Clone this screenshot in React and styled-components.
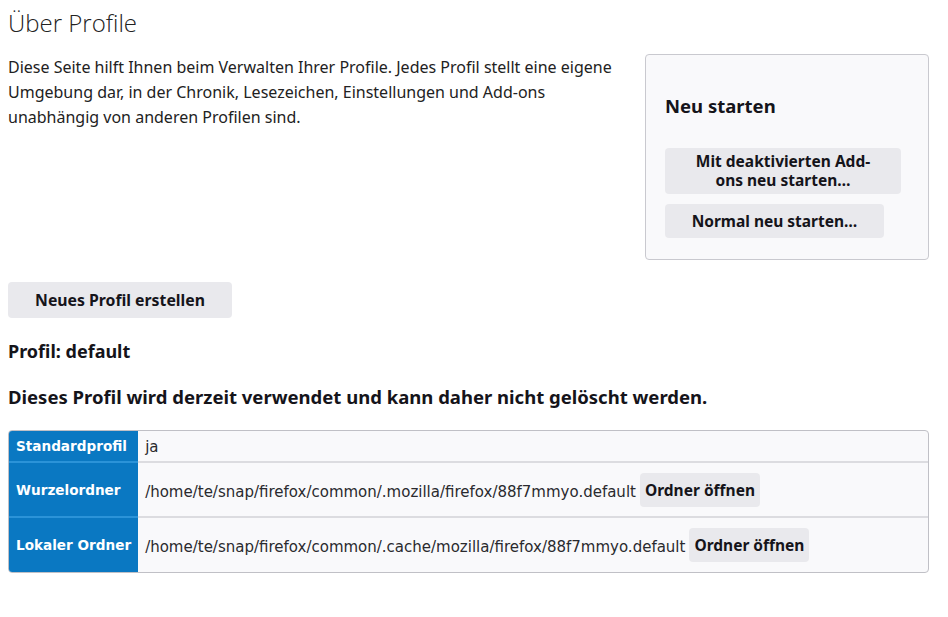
import React from 'react';
import styled, { createGlobalStyle } from 'styled-components';

const GlobalStyle = createGlobalStyle`
    body {
        margin: 8px;
        background: #fff;
        color: #15141a;
        font-family: "Noto Sans", "Open Sans", sans-serif;
    }
`

const Page = styled.div`
    width: 921px;
    display: flex;
    flex-direction: column;
`
const Title = styled.h1`
    margin: 0;
    font-family: "Open Sans", sans-serif;
    font-weight: 300;
    font-size: 24px;
    line-height: 30px;
    color: #222;
`
const TopRow = styled.div`
    display: flex;
    justify-content: space-between;
    align-items: flex-start;
    margin-top: 16px;
`
const Intro = styled.p`
    margin: 1px 0 0;
    width: 622px;
    font-size: 16px;
    line-height: 25px;
    color: #222;
`
const RestartBox = styled.aside`
    width: 244px;
    height: 204px;
    padding: 0 19px;
    background: #f9f9fb;
    border: 1px solid #c9c9cf;
    border-radius: 4px;
    display: flex;
    flex-direction: column;
    align-items: flex-start;
`
const BoxTitle = styled.h2`
    margin: 38px 0 29px;
    font-size: 18.5px;
    font-weight: 700;
    line-height: 26px;
`
const Button = styled.button`
    font-family: "Noto Sans", sans-serif;
    font-weight: 700;
    font-size: ${props => props.fs || 15.5}px;
    line-height: ${props => props.lh || 20}px;
    color: #15141a;
    background: #e9e9ed;
    border: 0;
    border-radius: 4px;
    padding: ${props => props.pad || '7px 14px'};
    width: ${props => props.w ? props.w + 'px' : 'auto'};
    margin: ${props => props.m || 0};
    text-align: center;
    white-space: ${props => props.nowrap ? 'nowrap' : 'normal'};
    cursor: pointer;
`
const CreateRow = styled.div`
    margin-top: 22px;
`
const ProfileName = styled.h2`
    margin: 21px 0 0;
    font-size: 18px;
    font-weight: 700;
    line-height: 24px;
`
const InUse = styled.h3`
    margin: 20px 0 0;
    font-size: 18.5px;
    font-weight: 700;
    line-height: 28px;
`
const Table = styled.table`
    margin-top: 19px;
    width: 921px;
    border-collapse: separate;
    border-spacing: 0;
    border: 1px solid #c0c0c6;
    border-radius: 4px;
    overflow: hidden;
    background: #f9f9fb;
    font-family: "DejaVu Sans", sans-serif;
`
const Th = styled.th`
    width: 114px;
    padding: 0 7px;
    text-align: left;
    white-space: nowrap;
    background: #0a78c2;
    color: #fff;
    font-size: 13.6px;
    font-weight: 700;
    height: ${props => props.h}px;
    border-top: ${props => props.first ? 'none' : '2px solid #2b93d8'};
`
const Td = styled.td`
    padding: 0 7px;
    font-size: 15px;
    color: #2a2a2e;
    white-space: nowrap;
    height: ${props => props.h}px;
    border-top: ${props => props.first ? 'none' : '2px solid #dcdce0'};
`
const Path = styled.span`
    vertical-align: middle;
`

const rows = [
    { label: 'Standardprofil', value: 'ja', h: 30 },
    { label: 'Wurzelordner', value: '/home/te/snap/firefox/common/.mozilla/firefox/88f7mmyo.default', h: 53, open: true },
    { label: 'Lokaler Ordner', value: '/home/te/snap/firefox/common/.cache/mozilla/firefox/88f7mmyo.default', h: 54, open: true },
]

const App = () => {
    return (
        <>
            <GlobalStyle />
            <Page>
                <Title>Über Profile</Title>
                <TopRow>
                    <Intro>
                        Diese Seite hilft Ihnen beim Verwalten Ihrer Profile. Jedes Profil stellt eine eigene
                        Umgebung dar, in der Chronik, Lesezeichen, Einstellungen und Add-ons
                        unabhängig von anderen Profilen sind.
                    </Intro>
                    <RestartBox>
                        <BoxTitle>Neu starten</BoxTitle>
                        <Button w={236} pad="4px 24px" lh={19}>Mit deaktivierten Add-ons neu starten…</Button>
                        <Button w={219} m="10px 0 0" nowrap>Normal neu starten…</Button>
                    </RestartBox>
                </TopRow>
                <CreateRow>
                    <Button w={224} pad="8px 6px" fs={15.8} nowrap>Neues Profil erstellen</Button>
                </CreateRow>
                <ProfileName>Profil: default</ProfileName>
                <InUse>Dieses Profil wird derzeit verwendet und kann daher nicht gelöscht werden.</InUse>
                <Table>
                    <tbody>
                        {rows.map((r, i) => (
                            <tr key={r.label}>
                                <Th h={r.h} first={i === 0}>{r.label}</Th>
                                <Td h={r.h} first={i === 0}>
                                    <Path>{r.value}</Path>
                                    {r.open ? <Button pad="7px 5px" m="0 0 0 4px" nowrap>Ordner öffnen</Button> : null}
                                </Td>
                            </tr>
                        ))}
                    </tbody>
                </Table>
            </Page>
        </>
    )
}

export default App;
